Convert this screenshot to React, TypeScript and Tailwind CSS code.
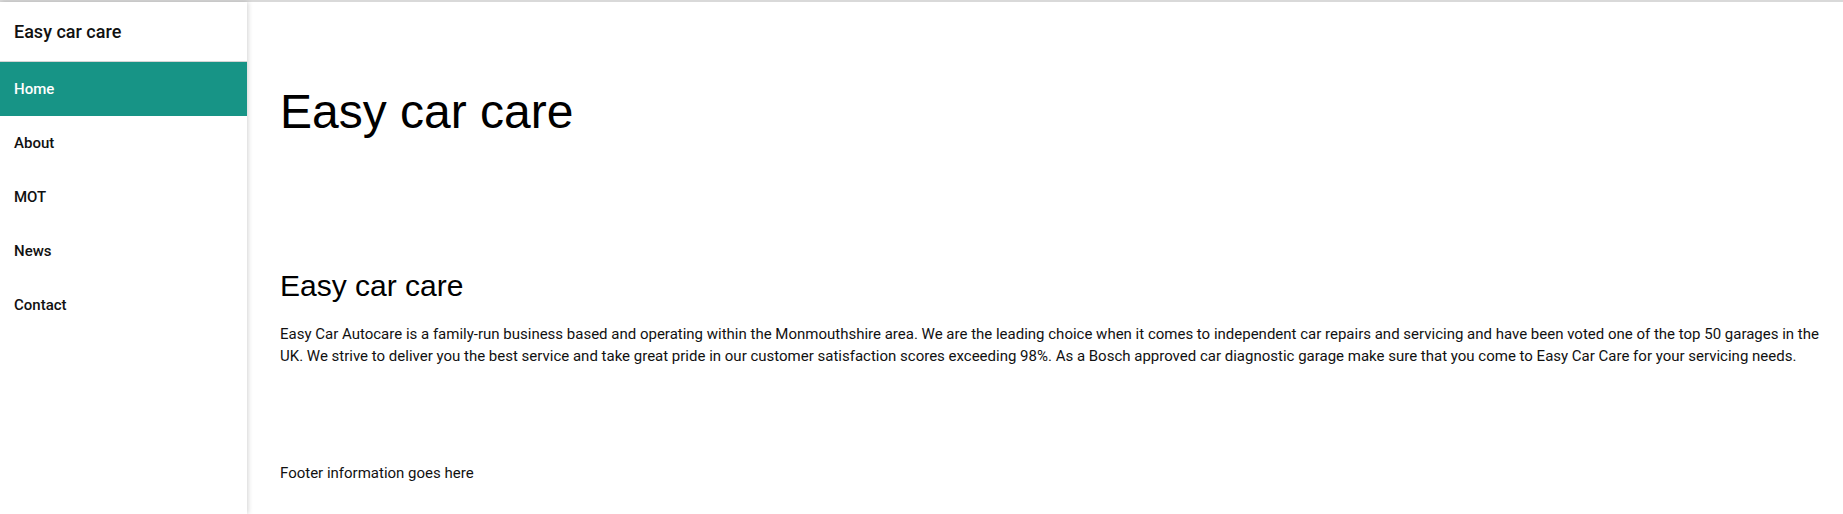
import React from "react";

const navItems = ["Home", "About", "MOT", "News", "Contact"];

export default function App() {
  return (
    <div className="w-[1843px] h-[514px] overflow-hidden bg-white flex flex-col" style={{ fontFamily: "Roboto, 'Liberation Sans', sans-serif" }}>
      <div className="h-[2px] w-full bg-[#d9d9d9] shrink-0" />
      <div className="flex flex-1 min-h-0">
        <aside className="w-[247px] shrink-0 bg-white shadow-[1px_0_5px_rgba(0,0,0,0.18)] z-10 flex flex-col">
          <div className="h-[60px] border-b border-[#d4d4d4] flex items-center pl-[14px]">
            <span className="text-[18px] leading-[24px] font-medium text-[#111]">Easy car care</span>
          </div>
          <nav className="flex flex-col">
            {navItems.map((item, i) => (
              <a
                key={item}
                className={
                  i === 0
                    ? "h-[54px] flex items-center px-[14px] text-[15px] font-medium bg-[#179486] text-white"
                    : "h-[54px] flex items-center px-[14px] text-[15px] font-medium text-[#111]"
                }
              >
                {item}
              </a>
            ))}
          </nav>
        </aside>
        <main className="flex-1 pl-[33px] pr-4 flex flex-col">
          <h1 className="mt-[86px] text-[48px] leading-[48px] text-black" style={{ fontFamily: "'Liberation Sans', Arial, sans-serif" }}>
            Easy car care
          </h1>
          <h2 className="mt-[132px] text-[30px] leading-[36px] text-black" style={{ fontFamily: "'Liberation Sans', Arial, sans-serif" }}>
            Easy car care
          </h2>
          <p className="mt-[19px] text-[15px] leading-[22px] text-[#111]">
            Easy Car Autocare is a family-run business based and operating within the Monmouthshire area. We are the leading choice when it comes to independent car repairs and servicing and have been voted one of the top 50 garages in the UK. We strive to deliver you the best service and take great pride in our customer satisfaction scores exceeding 98%. As a Bosch approved car diagnostic garage make sure that you come to Easy Car Care for your servicing needs.
          </p>
          <footer className="mt-[95px] text-[15px] leading-[22px] text-[#111]">Footer information goes here</footer>
        </main>
      </div>
    </div>
  );
}
